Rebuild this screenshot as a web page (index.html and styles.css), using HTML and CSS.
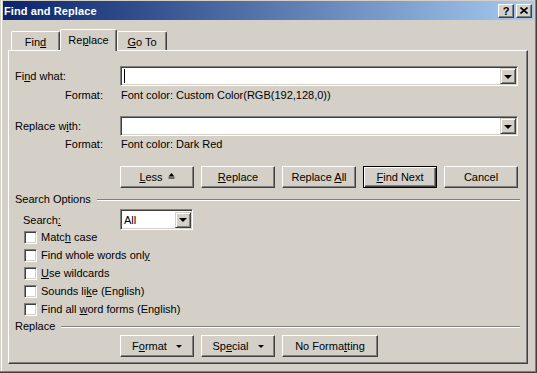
FILE: index.html
```html
<!DOCTYPE html>
<html lang="en">
<head>
  <meta charset="UTF-8" />
  <title>Find and Replace</title>
  <link rel="stylesheet" href="styles.css">
</head>
<body>
  <div class="window">
    <div class="titlebar">
      <span class="title">Find and Replace</span>
      <div class="caption-btns">
        <span class="cap-btn help">?</span>
        <span class="cap-btn">
          <svg width="8" height="7" viewBox="0 0 8 7"><path d="M0.5 0.5 L7.5 6.5 M7.5 0.5 L0.5 6.5" stroke="#000" stroke-width="1.6"/></svg>
        </span>
      </div>
    </div>

    <div class="tabs">
      <div class="tab">Fin<u>d</u></div>
      <div class="tab active">Re<u>p</u>lace</div>
      <div class="tab"><u>G</u>o To</div>
    </div>

    <div class="panel">
      <div class="field-row find-row">
        <span class="label">Fi<u>n</u>d what:</span>
        <div class="combo wide">
          <span class="caret"></span>
          <span class="drop"><i class="arrow"></i></span>
        </div>
      </div>
      <div class="format-row first-format">
        <span class="format-label">Format:</span>
        <span class="format-value">Font color: Custom Color(RGB(192,128,0))</span>
      </div>

      <div class="field-row replace-row">
        <span class="label">Replace w<u>i</u>th:</span>
        <div class="combo wide">
          <span class="drop"><i class="arrow"></i></span>
        </div>
      </div>
      <div class="format-row second-format">
        <span class="format-label">Format:</span>
        <span class="format-value">Font color: Dark Red</span>
      </div>

      <div class="btn-row main-btns">
        <span class="btn"><span><u>L</u>ess</span>
          <svg class="less-icon" width="7" height="6" viewBox="0 0 7 6"><path d="M3.5 0 L6.5 3.5 L0.5 3.5 Z" fill="#000"/><rect x="0.5" y="4.5" width="6" height="1" fill="#000"/></svg>
        </span>
        <span class="btn"><span><u>R</u>eplace</span></span>
        <span class="btn"><span>Replace <u>A</u>ll</span></span>
        <span class="btn default"><span><u>F</u>ind Next</span></span>
        <span class="btn"><span>Cancel</span></span>
      </div>

      <div class="group options-group">
        <span>Search Options</span>
        <span class="rule"></span>
      </div>

      <div class="field-row search-row">
        <span class="label search-label">Search<u>:</u></span>
        <div class="combo select">
          <span class="select-text">All</span>
          <span class="drop"><i class="arrow"></i></span>
        </div>
      </div>

      <div class="checks">
        <div class="check-row"><span class="box"></span><span>Matc<u>h</u> case</span></div>
        <div class="check-row"><span class="box"></span><span>Find whole words onl<u>y</u></span></div>
        <div class="check-row"><span class="box"></span><span><u>U</u>se wildcards</span></div>
        <div class="check-row"><span class="box"></span><span>Sounds li<u>k</u>e (English)</span></div>
        <div class="check-row"><span class="box"></span><span>Find all <u>w</u>ord forms (English)</span></div>
      </div>

      <div class="group replace-group">
        <span>Replace</span>
        <span class="rule"></span>
      </div>

      <div class="btn-row bottom-btns">
        <span class="btn"><span>F<u>o</u>rmat</span><i class="small-arrow"></i></span>
        <span class="btn"><span>Sp<u>e</u>cial</span><i class="small-arrow"></i></span>
        <span class="btn wide-btn"><span>No Forma<u>t</u>ting</span></span>
      </div>
    </div>
  </div>
</body>
</html>
```

FILE: styles.css
```css
body {
  margin: 0;
  font-family: 'Liberation Sans', Arial, sans-serif;
  font-size: 11px;
  color: #000;
  background: #d4d0c8;
}
u {
  text-decoration-thickness: 1px;
  text-underline-offset: 1px;
}
.window {
  width: 537px;
  height: 373px;
  box-sizing: border-box;
  padding: 1px 3px 3px 3px;
  background: #d4d0c8;
  box-shadow: inset -1px -1px #404040, inset -2px -2px #808080, inset 1px 0 #d4d0c8, inset 2px 0 #fff;
}
.titlebar {
  height: 19px;
  display: flex;
  align-items: center;
  justify-content: space-between;
  background: linear-gradient(90deg, #0a246a, #a6caf0);
  padding-left: 1px;
}
.title {
  color: #fff;
  font-weight: bold;
  font-size: 11px;
  letter-spacing: 0.1px;
}
.caption-btns {
  display: flex;
  gap: 2px;
  margin-right: 2px;
}
.cap-btn {
  width: 16px;
  height: 14px;
  box-sizing: border-box;
  display: flex;
  align-items: center;
  justify-content: center;
  background: #d4d0c8;
  border: 1px solid;
  border-color: #fff #404040 #404040 #fff;
  box-shadow: inset -1px -1px #808080;
}
.help {
  font-weight: bold;
  font-size: 11px;
  line-height: 12px;
}

/* tabs */
.tabs {
  display: flex;
  align-items: flex-end;
  height: 21px;
  margin-top: 9px;
  margin-left: 8px;
}
.tab {
  height: 19px;
  box-sizing: border-box;
  padding: 4px 0 0;
  text-align: center;
  border: 1px solid;
  border-bottom: none;
  border-color: #fff #404040 #fff #fff;
  border-radius: 2px 2px 0 0;
  box-shadow: inset -1px 0 #808080;
  width: 50px;
}
.tab:first-child {
  width: 49px;
}
.tab.active {
  position: relative;
  z-index: 1;
  width: 57px;
  height: 22px;
  margin-bottom: -1px;
  padding-top: 4px;
  background: #d4d0c8;
}

/* panel */
.panel {
  width: 520px;
  height: 314px;
  box-sizing: border-box;
  margin-left: 5px;
  padding: 0 7px 0 6px;
  border: 1px solid;
  border-color: #fff #404040 #404040 #fff;
  box-shadow: inset -1px -1px #808080;
}
.field-row {
  display: flex;
  align-items: center;
}
.label {
  width: 105px;
}
.find-row {
  margin-top: 15px;
}
.replace-row {
  margin-top: 14px;
}
.combo {
  height: 20px;
  box-sizing: border-box;
  display: flex;
  align-items: center;
  justify-content: space-between;
  background: #fff;
  border: 1px solid;
  border-color: #808080 #fff #fff #808080;
  box-shadow: inset 1px 1px #404040, inset -1px -1px #d4d0c8;
  padding: 1px;
}
.combo.wide {
  width: 398px;
}
.caret {
  width: 1px;
  height: 14px;
  margin-left: 2px;
  background: #000;
}
.drop {
  width: 16px;
  height: 16px;
  margin-left: auto;
  box-sizing: border-box;
  display: flex;
  align-items: center;
  justify-content: center;
  background: #d4d0c8;
  border: 1px solid;
  border-color: #d4d0c8 #404040 #404040 #d4d0c8;
  box-shadow: inset 1px 1px #fff, inset -1px -1px #808080;
}
.arrow {
  width: 0;
  height: 0;
  border-left: 4px solid transparent;
  border-right: 4px solid transparent;
  border-top: 4px solid #000;
  margin-top: 1px;
}
.format-row {
  display: flex;
  height: 13px;
  line-height: 13px;
}
.first-format {
  margin-top: 3px;
}
.second-format {
  margin-top: 2px;
}
.format-label {
  width: 88px;
  text-align: right;
}
.format-value {
  margin-left: 18px;
}

/* buttons */
.btn-row {
  display: flex;
  gap: 7px;
  padding-left: 105px;
}
.main-btns {
  margin-top: 15px;
}
.btn {
  width: 74px;
  height: 22px;
  box-sizing: border-box;
  display: flex;
  align-items: center;
  justify-content: center;
  border: 1px solid;
  border-color: #fff #404040 #404040 #fff;
  box-shadow: inset -1px -1px #808080;
}
.btn.default {
  border-color: #000;
  box-shadow: inset 1px 1px #fff, inset -1px -1px #404040, inset -2px -2px #808080;
}
.less-icon {
  margin-left: 5px;
  margin-top: -2px;
}
.small-arrow {
  width: 0;
  height: 0;
  border-left: 3px solid transparent;
  border-right: 3px solid transparent;
  border-top: 3px solid #000;
  margin-left: 9px;
}
.wide-btn {
  width: 96px;
}

/* groups */
.group {
  display: flex;
  align-items: center;
  height: 13px;
  line-height: 13px;
}
.options-group {
  margin-top: 5px;
}
.replace-group {
  margin-top: 2px;
}
.rule {
  flex: 1;
  height: 0;
  margin-left: 6px;
  border-top: 1px solid #808080;
  border-bottom: 1px solid #fff;
}

.search-row {
  margin-top: 3px;
}
.search-label {
  width: 97px;
  padding-left: 8px;
}
.combo.select {
  width: 73px;
  height: 21px;
}
.select-text {
  padding-left: 2px;
}

.checks {
  padding-left: 9px;
  margin-top: -2px;
}
.check-row {
  height: 18px;
  display: flex;
  align-items: center;
}
.box {
  width: 13px;
  height: 13px;
  box-sizing: border-box;
  margin-right: 4px;
  background: #fff;
  border: 1px solid;
  border-color: #808080 #fff #fff #808080;
  box-shadow: inset 1px 1px #404040, inset -1px -1px #d4d0c8;
}
.bottom-btns {
  margin-top: 2px;
}
```
